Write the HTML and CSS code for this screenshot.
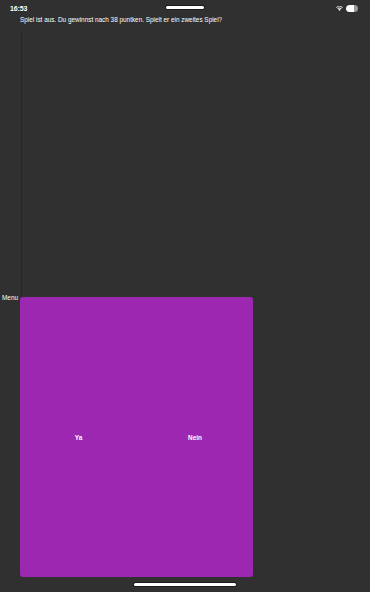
FILE: index.html
```html
<!DOCTYPE html>
<html>
<head>
    <meta charset="UTF-8">
    <title>Spiel</title>
    <link rel="stylesheet" href="styles.css">
</head>
<body>
    <div class="screen">
        <div class="status-bar">
            <span class="time">16:53</span>
            <span class="pill"></span>
            <span class="status-icons">
                <svg class="wifi" width="7" height="6" viewBox="0 0 14 12">
                    <path d="M7 12 L4.5 9 A3.6 3.6 0 0 1 9.5 9 Z" fill="#fff"/>
                    <path d="M2.6 7 A6.5 6.5 0 0 1 11.4 7 L10.3 8.2 A5 5 0 0 0 3.7 8.2 Z" fill="#fff"/>
                    <path d="M0.4 4.6 A9.5 9.5 0 0 1 13.6 4.6 L12.5 5.8 A8 8 0 0 0 1.5 5.8 Z" fill="#fff"/>
                </svg>
                <span class="battery"><span class="battery-level"></span></span>
            </span>
        </div>

        <p class="message">Spiel ist aus. Du gewinnst nach 38 puntken. Spielt er ein zweites Spiel?</p>

        <div class="game-area">
            <div class="menu-label">Menu</div>
            <div class="game-column">
                <div class="track"></div>
                <div class="answer-panel">
                    <button class="answer">Ya</button>
                    <button class="answer">Nein</button>
                </div>
            </div>
        </div>

        <div class="home-bar"><span class="home-indicator"></span></div>
    </div>
</body>
</html>
```

FILE: styles.css
```css
html, body {
    margin: 0;
    padding: 0;
    height: 100%;
}

body {
    font-family: "Liberation Sans", Arial, sans-serif;
    background-color: #303030;
    color: #fff;
}

.screen {
    display: flex;
    flex-direction: column;
    height: 592px;
}

.status-bar {
    display: flex;
    align-items: center;
    justify-content: space-between;
    height: 16px;
    padding: 0 12px 0 10px;
    position: relative;
}

.time {
    font-size: 7px;
    font-weight: bold;
    letter-spacing: -0.1px;
}

.pill {
    position: absolute;
    left: 166px;
    top: 6px;
    width: 38px;
    height: 3px;
    border-radius: 2px;
    background-color: #fff;
    box-shadow: 0 0 0 1px #1c1c1c;
}

.status-icons {
    display: flex;
    align-items: center;
    gap: 3px;
}

.battery {
    display: flex;
    width: 12px;
    height: 7px;
    border-radius: 4px;
    background-color: #9a9a9a;
    overflow: hidden;
}

.battery-level {
    width: 8px;
    background-color: #fff;
    border-radius: 4px 0 0 4px;
}

.message {
    margin: 0;
    padding-left: 20px;
    font-size: 6.4px;
    line-height: 8px;
    height: 14px;
}

.game-area {
    display: flex;
    flex: 1;
}

.menu-label {
    width: 20px;
    padding-left: 2px;
    box-sizing: border-box;
    font-size: 6.4px;
    margin-top: 264px;
}

.game-column {
    display: flex;
    flex-direction: column;
}

.track {
    height: 267px;
    border-left: 1px solid #262626;
    margin-left: 1px;
}

.answer-panel {
    display: grid;
    grid-template-columns: 117px 116px;
    width: 233px;
    height: 280px;
    background-color: #9c27b0;
    border-radius: 3px;
}

.answer {
    border: none;
    background: none;
    padding: 0;
    color: #fff;
    font-family: "Liberation Sans", Arial, sans-serif;
    font-size: 6.4px;
    font-weight: bold;
    cursor: pointer;
}

.home-bar {
    display: flex;
    justify-content: flex-start;
    padding: 6px 0 0 134px;
    height: 15px;
    box-sizing: border-box;
}

.home-indicator {
    width: 102px;
    height: 3px;
    border-radius: 2px;
    background-color: #fff;
    box-shadow: 0 0 0 1px #1c1c1c;
}
```
